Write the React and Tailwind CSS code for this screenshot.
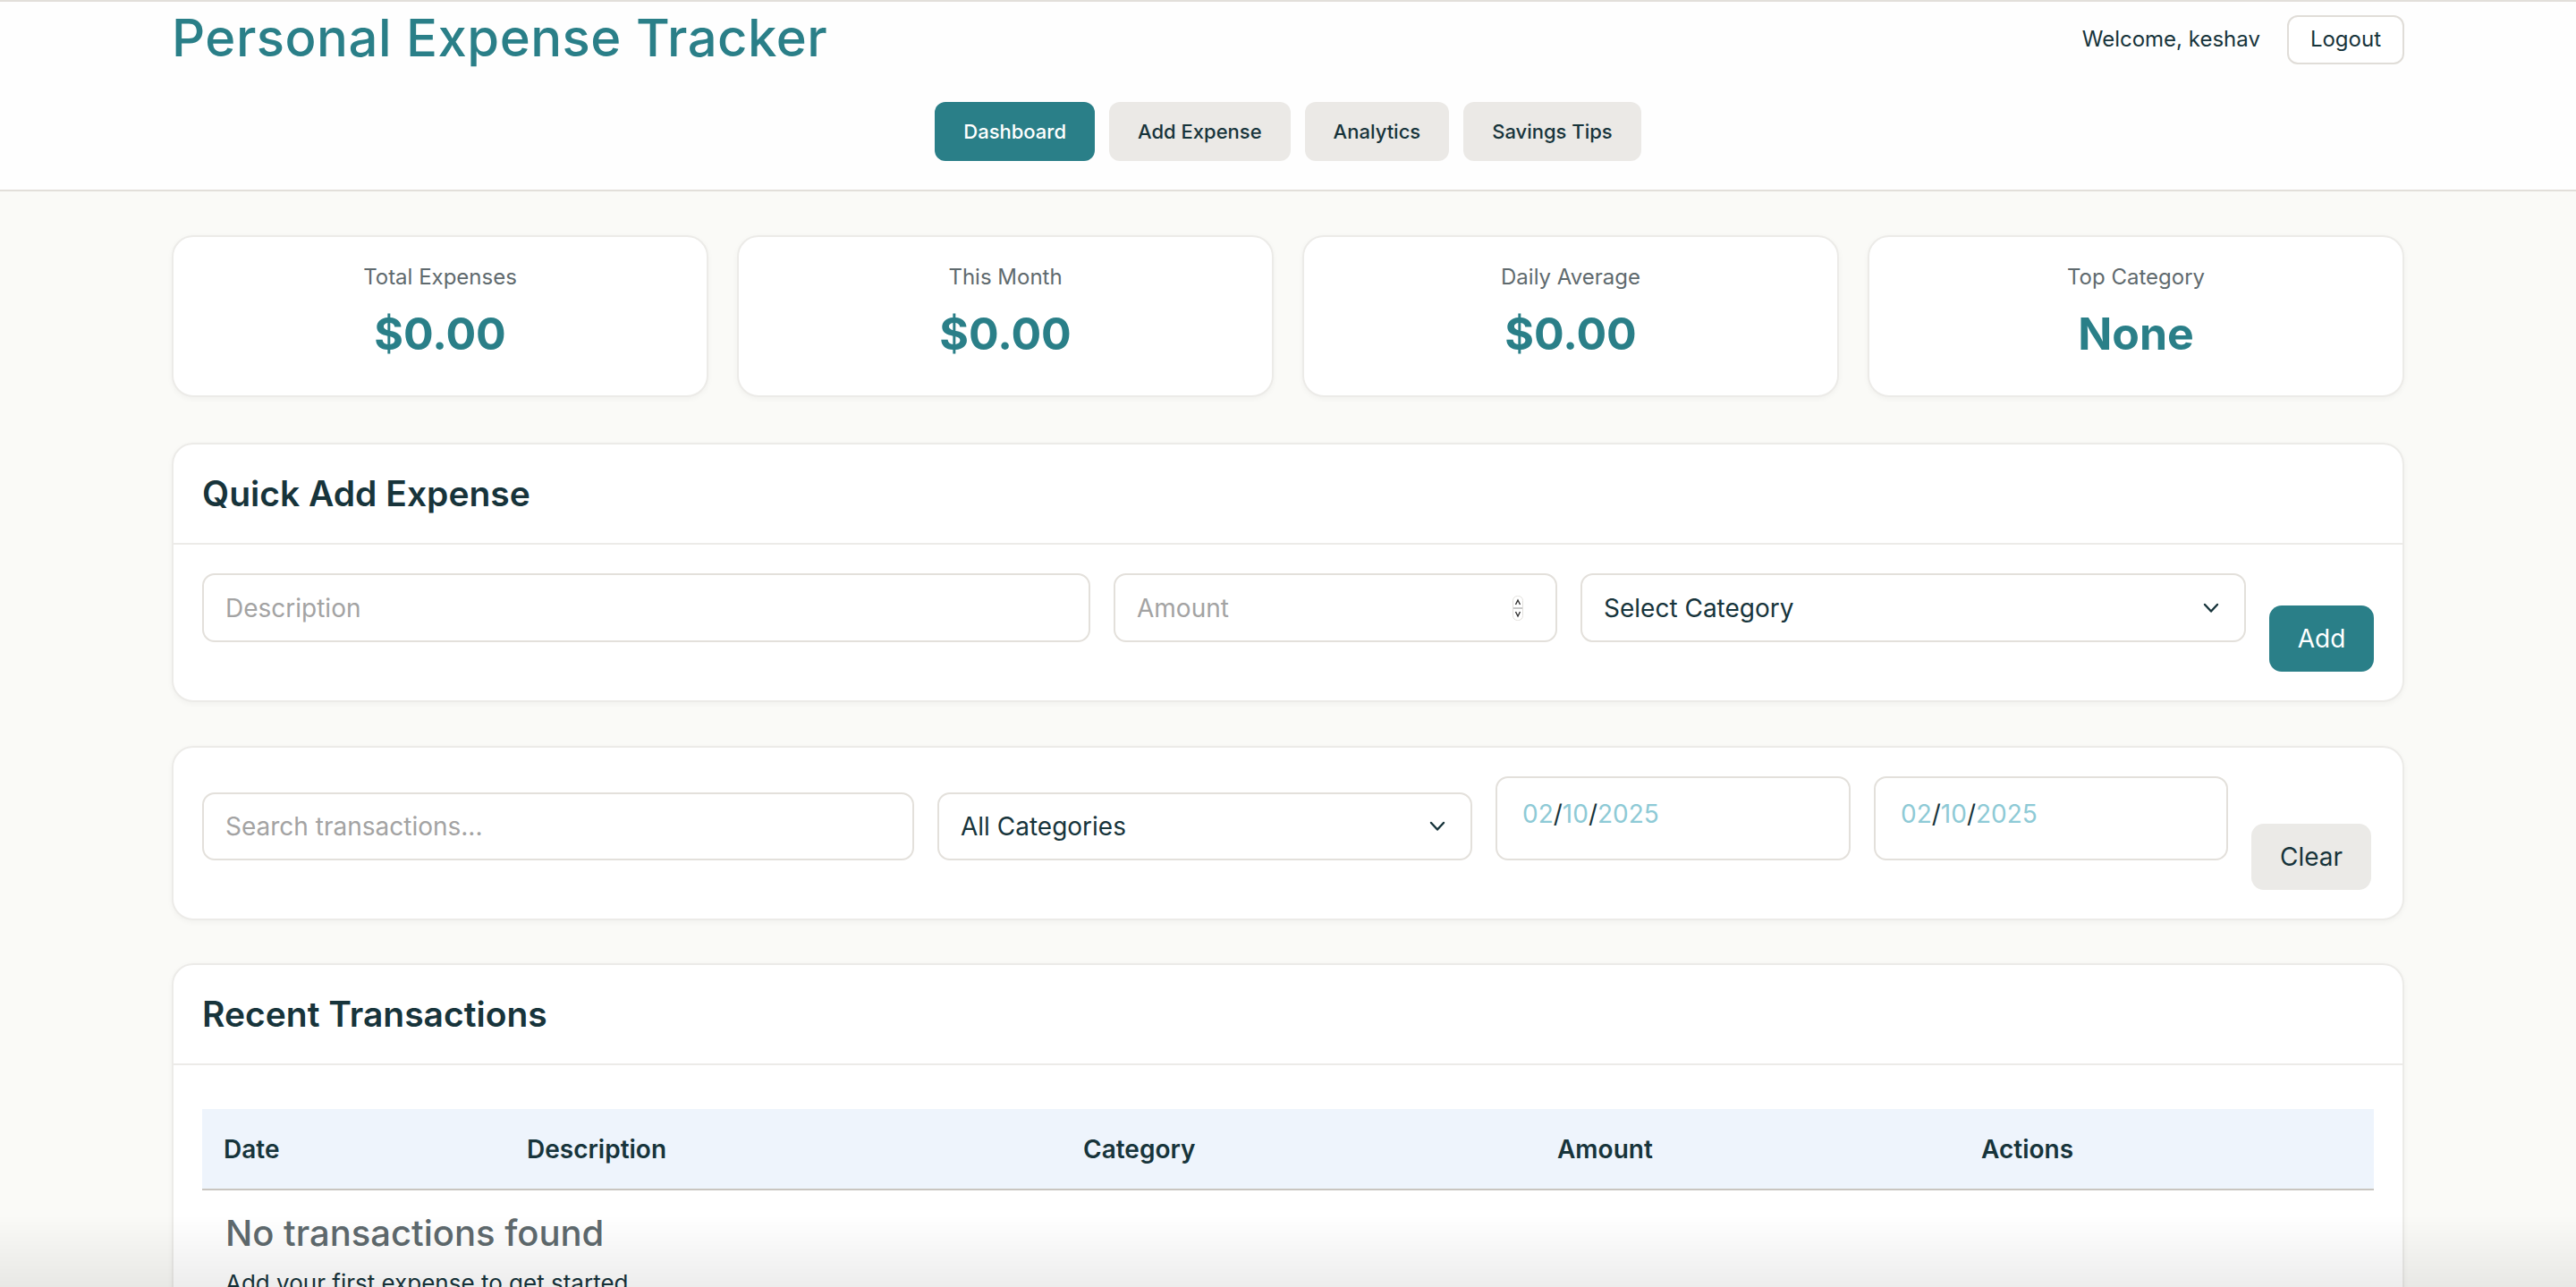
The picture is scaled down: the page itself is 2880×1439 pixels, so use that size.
import React from 'react';

const teal = 'bg-[#2a7f88]';

function Chevron() {
  return (
    <svg width="18" height="12" viewBox="0 0 18 12" fill="none" className="shrink-0">
      <path d="M2 2 L9 9.5 L16 2" stroke="#17343b" strokeWidth="2.4" strokeLinecap="round" strokeLinejoin="round" />
    </svg>
  );
}

function Spinner() {
  return (
    <svg width="12" height="28" viewBox="0 0 12 28" fill="none" className="shrink-0">
      <rect x="0.5" y="0.5" width="11" height="27" rx="5" fill="#fff" stroke="#e2e0dc" />
      <path d="M3.5 10 L6 5 L8.5 10" stroke="#333" strokeWidth="1.4" fill="none" />
      <line x1="1" y1="14" x2="11" y2="14" stroke="#c9c9c9" strokeWidth="2" />
      <path d="M3.5 18 L6 23 L8.5 18" stroke="#333" strokeWidth="1.4" fill="none" />
    </svg>
  );
}

function StatCard({ label, value }) {
  return (
    <div className="h-[181px] bg-white border-2 border-[#ecebe8] rounded-[24px] shadow-[0_2px_6px_rgba(0,0,0,0.04)] flex flex-col items-center pt-[30px]">
      <div className="text-[24px] leading-[30px] text-[#5f6a6e]">{label}</div>
      <div className="mt-[18px] text-[50px] leading-[60px] font-bold text-[#2a7f88]">{value}</div>
    </div>
  );
}

function DateBox() {
  return (
    <div className="h-[94px] border-2 border-[#e3e0db] rounded-[14px] px-[28px] pt-[23px] text-[28px] leading-[34px] text-[#8ecad6]">
      02<span className="text-[#17343b]">/</span>10<span className="text-[#17343b]">/</span>2025
    </div>
  );
}

export default function App() {
  return (
    <div className="min-h-screen bg-[#fafaf7] text-[#17343b]" style={{ fontFamily: 'Inter, "Liberation Sans", sans-serif' }}>
      {/* Cabeçalho */}
      <header className="bg-[#fefefe] border-t-2 border-b-2 border-[#e2dfda]">
        <div className="w-[2496px] mx-auto pt-[4px] pb-[32px]">
          <div className="flex justify-between items-center">
            <h1 className="text-[58px] leading-[72px] font-medium tracking-[0.5px] text-[#2a7f88]">Personal Expense Tracker</h1>
            <div className="flex items-center gap-[30px] mt-[4px]">
              <span className="text-[24px]">Welcome, keshav</span>
              <button className="h-[55px] px-[24px] border-2 border-[#e0ddd8] rounded-[12px] bg-white text-[24px]">Logout</button>
            </div>
          </div>
          <nav className="flex justify-center gap-[16px] mt-[36px]">
            <button className={`h-[66px] px-[32px] rounded-[12px] ${teal} text-white text-[22px] font-medium`}>Dashboard</button>
            <button className="h-[66px] px-[32px] rounded-[12px] bg-[#ebe9e6] text-[22px] font-medium">Add Expense</button>
            <button className="h-[66px] px-[32px] rounded-[12px] bg-[#ebe9e6] text-[22px] font-medium">Analytics</button>
            <button className="h-[66px] px-[32px] rounded-[12px] bg-[#ebe9e6] text-[22px] font-medium">Savings Tips</button>
          </nav>
        </div>
      </header>

      <main className="w-[2496px] mx-auto pt-[49px] pb-[80px]">
        {/* Resumo */}
        <div className="grid grid-cols-4 gap-[32px]">
          <StatCard label="Total Expenses" value="$0.00" />
          <StatCard label="This Month" value="$0.00" />
          <StatCard label="Daily Average" value="$0.00" />
          <StatCard label="Top Category" value="None" />
        </div>

        {/* Adicionar despesa rápida */}
        <section className="mt-[51px] bg-white border-2 border-[#ecebe8] rounded-[24px] shadow-[0_2px_6px_rgba(0,0,0,0.04)]">
          <div className="h-[112px] px-[32px] flex items-center border-b-2 border-[#ecebe8]">
            <h2 className="text-[39px] font-semibold">Quick Add Expense</h2>
          </div>
          <div className="flex items-start gap-[26px] px-[32px] pt-[32px] pb-[32px]">
            <div className="w-[993px] shrink-0 h-[77px] border-2 border-[#e3e0db] rounded-[14px] px-[24px] flex items-center text-[28px] text-[#a3a3a3]">Description</div>
            <div className="w-[496px] shrink-0 h-[77px] border-2 border-[#e3e0db] rounded-[14px] pl-[24px] pr-[36px] flex items-center justify-between text-[28px] text-[#a3a3a3]">
              <span>Amount</span>
              <Spinner />
            </div>
            <div className="w-[744px] shrink-0 h-[77px] border-2 border-[#e3e0db] rounded-[14px] pl-[24px] pr-[28px] flex items-center justify-between text-[28px]">
              <span>Select Category</span>
              <Chevron />
            </div>
            <button className={`mt-[36px] w-[117px] h-[74px] rounded-[14px] ${teal} text-white text-[28px]`}>Add</button>
          </div>
        </section>

        {/* Filtros */}
        <section className="mt-[49px] bg-white border-2 border-[#ecebe8] rounded-[24px] shadow-[0_2px_6px_rgba(0,0,0,0.04)]">
          <div className="flex items-start gap-[26px] px-[32px] pt-[32px] pb-[32px]">
            <div className="w-[796px] shrink-0 mt-[18px] h-[76px] border-2 border-[#e3e0db] rounded-[14px] px-[24px] flex items-center text-[28px] text-[#a3a3a3]">Search transactions...</div>
            <div className="w-[598px] shrink-0 mt-[18px] h-[76px] border-2 border-[#e3e0db] rounded-[14px] pl-[24px] pr-[28px] flex items-center justify-between text-[28px]">
              <span>All Categories</span>
              <Chevron />
            </div>
            <div className="w-[397px] shrink-0"><DateBox /></div>
            <div className="w-[396px] shrink-0"><DateBox /></div>
            <button className="mt-[53px] w-[134px] h-[74px] rounded-[14px] bg-[#ebeae7] text-[28px]">Clear</button>
          </div>
        </section>

        {/* Transações recentes */}
        <section className="mt-[48px] bg-white border-2 border-[#ecebe8] rounded-[24px] shadow-[0_2px_6px_rgba(0,0,0,0.04)]">
          <div className="h-[112px] px-[32px] flex items-center border-b-2 border-[#ecebe8]">
            <h2 className="text-[39px] font-semibold">Recent Transactions</h2>
          </div>
          <div className="px-[32px] pt-[49px] pb-[40px]">
            <table className="w-full border-collapse text-left">
              <thead>
                <tr className="bg-[#eef4fc] border-b-2 border-[#c9c5c0] h-[90px] text-[28px] font-semibold">
                  <th className="w-[339px] pl-[24px] font-semibold">Date</th>
                  <th className="w-[622px] pl-[24px] font-semibold">Description</th>
                  <th className="w-[530px] pl-[24px] font-semibold">Category</th>
                  <th className="w-[474px] pl-[24px] font-semibold">Amount</th>
                  <th className="pl-[24px] font-semibold">Actions</th>
                </tr>
              </thead>
              <tbody>
                <tr>
                  <td colSpan={5} className="pl-[26px] pt-[24px]">
                    <div className="text-[40px] leading-[48px] font-medium text-[#5f6a6e]">No transactions found</div>
                    <div className="mt-[12px] text-[26px] text-[#17343b]">Add your first expense to get started</div>
                  </td>
                </tr>
              </tbody>
            </table>
          </div>
        </section>
      </main>

      {/* sombra inferior da janela */}
      <div className="fixed left-0 right-0 bottom-0 h-[80px] pointer-events-none bg-gradient-to-b from-transparent to-[rgba(0,0,0,0.07)]" />
    </div>
  );
}
